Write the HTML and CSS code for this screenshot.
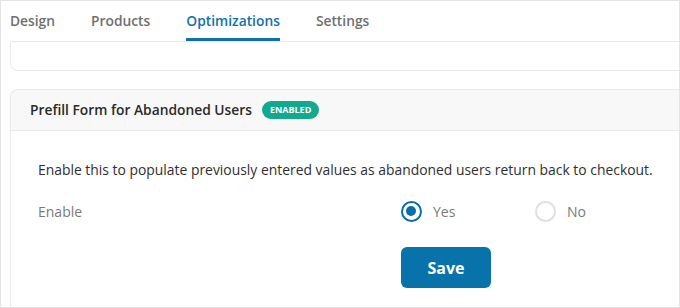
FILE: index.html
```html
<!DOCTYPE html>
<html>
<head>
<meta charset="utf-8">
<link rel="stylesheet" href="styles.css">
</head>
<body>
<div class="frame">
  <nav class="tabs">
    <div class="tab">Design</div>
    <div class="tab">Products</div>
    <div class="tab active">Optimizations</div>
    <div class="tab">Settings</div>
  </nav>
  <div class="card card-collapsed"></div>
  <div class="card card-main">
    <div class="card-head">
      <span class="card-title">Prefill Form for Abandoned Users</span>
      <span class="badge">ENABLED</span>
    </div>
    <div class="card-body">
      <p class="desc">Enable this to populate previously entered values as abandoned users return back to checkout.</p>
      <div class="field">
        <div class="field-label">Enable</div>
        <div class="options">
          <label class="opt"><span class="radio checked"></span>Yes</label>
          <label class="opt"><span class="radio"></span>No</label>
        </div>
      </div>
      <div class="actions">
        <button class="save">Save</button>
      </div>
    </div>
  </div>
</div>
</body>
</html>
```
FILE: styles.css
```css
* { box-sizing: border-box; }
html, body { margin: 0; padding: 0; background: #fff; }
body { font-family: "Open Sans", "Noto Sans", sans-serif; }
.frame {
  width: 680px;
  height: 308px;
  border: 1px solid #e4e4e4;
  padding-left: 9px;
  overflow: hidden;
}
.tabs {
  display: flex;
  gap: 36px;
  border-bottom: 1px solid #e8e8ef;
  height: 41px;
}
.tab {
  height: 40px;
  padding-top: 10px;
  font-size: 13.8px;
  font-weight: 600;
  color: #6f6f6f;
  border-bottom: 3px solid transparent;
}
.tab.active {
  color: #1170ad;
  border-bottom-color: #1170ad;
}
.card {
  border: 1px solid #e8e8ef;
  border-right: none;
  background: #fff;
}
.card-collapsed {
  height: 29px;
  border-top: none;
  border-radius: 0 0 0 8px;
}
.card-main {
  margin-top: 18px;
  border-radius: 8px 0 0 0;
  border-bottom: none;
  height: 230px;
}
.card-head {
  height: 41px;
  background: #f8f8f8;
  border-bottom: 1px solid #e8e8ef;
  border-radius: 8px 0 0 0;
  display: flex;
  align-items: center;
  padding-left: 19px;
  padding-bottom: 1px;
  gap: 10px;
}
.card-title {
  font-size: 13.8px;
  font-weight: 600;
  color: #2a2a2a;
}
.badge {
  background: #13a98e;
  color: #fff;
  font-size: 9px;
  font-weight: 700;
  height: 18px;
  line-height: 18px;
  padding: 0 8px;
  border-radius: 9px;
}
.card-body {
  padding: 29px 0 0 27px;
}
.desc {
  margin: 0;
  font-size: 13.9px;
  line-height: 20px;
  color: #2f2f2f;
  white-space: nowrap;
}
.field {
  display: flex;
  align-items: center;
  margin-top: 19px;
  height: 24px;
}
.field-label {
  width: 363px;
  font-size: 14px;
  color: #7a7a7a;
}
.options { display: flex; }
.opt {
  width: 134px;
  display: flex;
  align-items: center;
  gap: 11px;
  font-size: 14px;
  color: #7a7a7a;
}
.radio {
  width: 21px;
  height: 21px;
  border-radius: 50%;
  border: 2px solid #dcdfe8;
  background: #fff;
  position: relative;
}
.radio.checked {
  border: 2.5px solid #0c6da6;
}
.radio.checked::after {
  content: "";
  position: absolute;
  left: 3px; top: 3px;
  width: 10px; height: 10px;
  border-radius: 50%;
  background: #0c6da6;
}
.actions {
  padding-left: 363px;
  margin-top: 24px;
}
.save {
  display: block;
  width: 90px;
  height: 41px;
  border: none;
  border-radius: 6px;
  background: #0873aa;
  color: #fff;
  font-family: "Open Sans", "Noto Sans", sans-serif;
  font-size: 16px;
  font-weight: 700;
}
```
